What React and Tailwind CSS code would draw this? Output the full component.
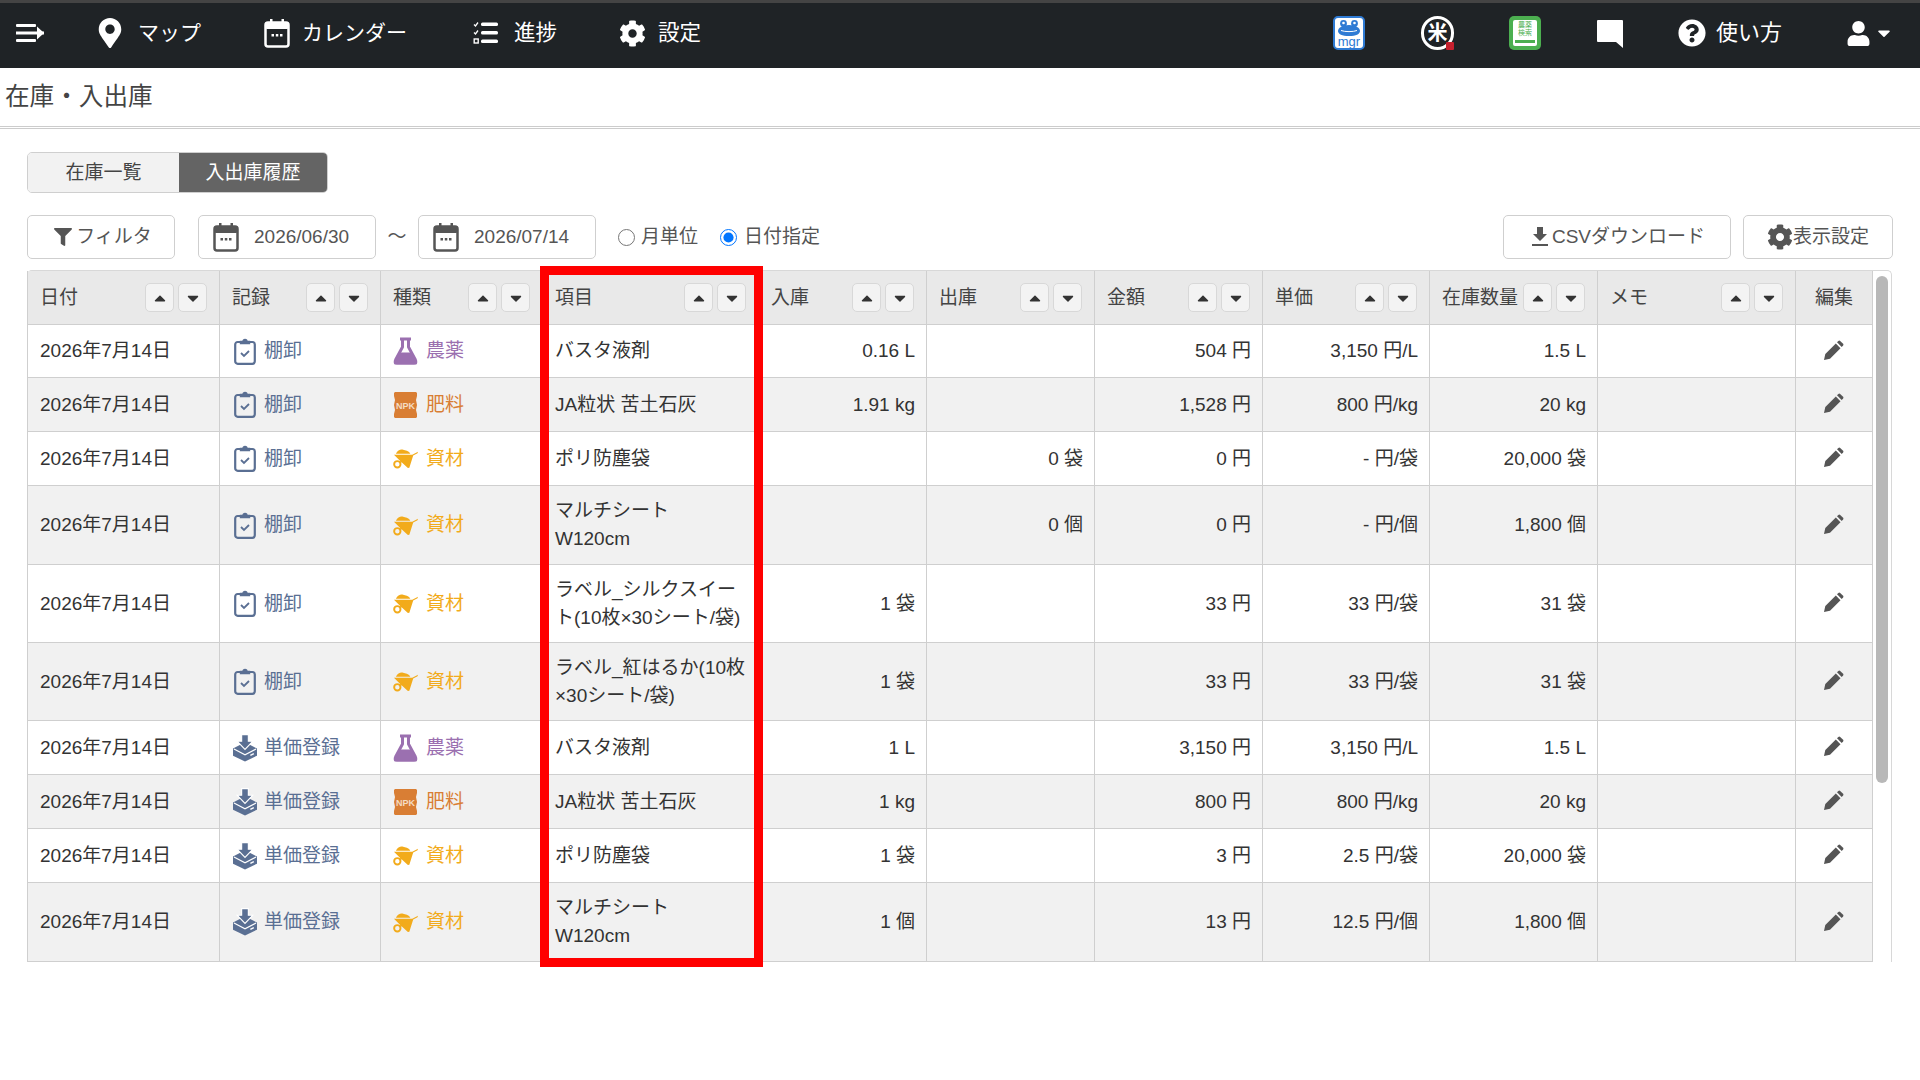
import React from "react";
import { FaMapMarkerAlt, FaCog, FaQuestionCircle, FaUser, FaCaretDown, FaCaretUp, FaFilter } from "react-icons/fa";

const font = { fontFamily: '"Liberation Sans","Noto Sans CJK JP",sans-serif' };

function Burger() {
  return (
    <svg width="28" height="22" viewBox="0 0 28 22" fill="white">
      <rect x="0" y="2" width="20" height="3" rx="1" />
      <rect x="0" y="9.5" width="28" height="3" />
      <rect x="0" y="17" width="20" height="3" rx="1" />
      <path d="M21 4.5 28 11 21 17.5Z" />
    </svg>
  );
}

function Calendar({ color, fill, w = 26, h = 30 }) {
  return (
    <svg width={w} height={h} viewBox="0 0 26 30">
      <rect x="1.5" y="4.5" width="23" height="24" rx="2.5" fill={fill} stroke={color} strokeWidth="2.5" />
      <rect x="1" y="4" width="24" height="7" rx="2" fill={color} />
      <rect x="6" y="1" width="2.5" height="5" fill={color} />
      <rect x="17.5" y="1" width="2.5" height="5" fill={color} />
      <rect x="7.5" y="16" width="2.5" height="2.5" fill={color} />
      <rect x="11.8" y="16" width="2.5" height="2.5" fill={color} />
      <rect x="16" y="16" width="2.5" height="2.5" fill={color} />
    </svg>
  );
}

function Tasks() {
  return (
    <svg width="25" height="24" viewBox="0 0 25 24" fill="none" stroke="white">
      <path d="M1 3.5 2.5 5 5 1.5M1 11.5 2.5 13 5 9.5" strokeWidth="1.3" />
      <rect x="1.2" y="18" width="4" height="4" strokeWidth="1.4" />
      <rect x="8" y="1.5" width="17" height="3.4" rx="1.5" fill="white" stroke="none" />
      <rect x="8" y="10" width="17" height="3.4" rx="1.5" fill="white" stroke="none" />
      <rect x="8" y="18.5" width="17" height="3.4" rx="1.5" fill="white" stroke="none" />
    </svg>
  );
}

function Mgr() {
  return (
    <div className="relative w-[32px] h-[34px] rounded-[5px] bg-white border-2 border-[#2f7bd4]">
      <svg width="28" height="20" viewBox="0 0 28 20" className="absolute left-0 top-0">
        <circle cx="8.5" cy="5.5" r="3.4" fill="#2f7bd4" />
        <circle cx="19.5" cy="5.5" r="3.4" fill="#2f7bd4" />
        <circle cx="8.5" cy="5" r="1.3" fill="white" />
        <circle cx="19.5" cy="5" r="1.3" fill="white" />
        <path d="M14 7c7 0 11 3 11 6s-4 5-11 5-11-2-11-5 4-6 11-6z" fill="#2f7bd4" />
        <path d="M6 12.5c4 1.5 12 1.5 16 0" stroke="white" strokeWidth="1" fill="none" />
      </svg>
      <span className="absolute left-0 right-0 top-[18px] text-center text-[13px] leading-[12px] text-[#2f7bd4]">mgr</span>
    </div>
  );
}

function Rice() {
  return (
    <div className="relative w-[33px] h-[34px] rounded-full border-[3px] border-white flex items-center justify-center">
      <span className="text-white text-[20px] leading-none font-bold">米</span>
      <span className="absolute right-[-3px] bottom-[-3px] w-[8px] h-[8px] bg-[#c5202e] rounded-[1px]"></span>
    </div>
  );
}

function BookIcon() {
  return (
    <div className="relative w-[32px] h-[34px] rounded-[5px] bg-[#4caf50] p-[4px]">
      <div className="w-full h-full bg-white rounded-[2px] flex flex-col items-center pt-[1px]">
        <span className="text-[#4caf50] text-[7px] leading-[8px] whitespace-nowrap">農薬</span>
        <span className="text-[#4caf50] text-[7px] leading-[8px] whitespace-nowrap">検索</span>
        <span className="mt-[3px] w-[20px] h-[3px] bg-[#4caf50]"></span>
      </div>
    </div>
  );
}

function Chat() {
  return (
    <svg width="28" height="32" viewBox="0 0 28 32" fill="white">
      <path d="M2 3h24a1 1 0 0 1 1 1v27l-7-6H2a1 1 0 0 1-1-1V4a1 1 0 0 1 1-1z" />
    </svg>
  );
}

function Clipboard() {
  return (
    <svg width="22" height="27" viewBox="0 0 22 27" fill="none" stroke="#5a6f93">
      <rect x="1.2" y="4" width="19.6" height="21.8" rx="2.5" strokeWidth="2.2" />
      <path d="M6.5 5.5V3.5h2.5a2 2 0 0 1 4 0h2.5v2z" fill="#5a6f93" strokeWidth="1.4" />
      <path d="M7 15l3 3 5-5" strokeWidth="1.8" />
    </svg>
  );
}

function BoxDown() {
  return (
    <svg width="25" height="28" viewBox="0 0 25 28">
      <path d="M12.5 8 25 14.5V22L12.5 28 0 22V14.5Z" fill="#5a6f93" />
      <path d="M1 15 12.5 21 24 15" fill="none" stroke="white" strokeWidth="1.3" />
      <path d="M9 0h7v7h4.5L12.5 15.5 4.5 7H9z" fill="#5a6f93" stroke="white" strokeWidth="1.2" />
      <rect x="18" y="20" width="4" height="1.5" fill="white" transform="rotate(-26 20 21)" />
    </svg>
  );
}

function Flask() {
  return (
    <svg width="25" height="28" viewBox="0 0 25 28">
      <path d="M7 2h11M9.5 2v8L2.5 23a2 2 0 0 0 2 3h16a2 2 0 0 0 2-3L15.5 10V2" fill="none" stroke="#9b70b0" strokeWidth="3" strokeLinejoin="round" />
      <path d="M6 15.5h13l5 9a2 2 0 0 1-2 3H3a2 2 0 0 1-2-3z" fill="#9b70b0" />
    </svg>
  );
}

function Bag() {
  return (
    <svg width="25" height="28" viewBox="0 0 25 28">
      <path d="M2 1h21l1 1v3l-1 4 1 5-1 5 1 4v3l-1 1H2l-1-1v-3l1-4-1-5 1-5-1-4V2z" fill="#d97e34" />
      <text x="12.5" y="17.5" textAnchor="middle" fontSize="9" fontWeight="700" fill="#f4dcc4" fontFamily="Liberation Sans">NPK</text>
    </svg>
  );
}

function Barrow() {
  return (
    <svg width="26" height="21" viewBox="0 0 26 21" fill="#f2ab1b">
      <path d="M1 6.5H20L26 3.5 25.5 5 21 7.5 17 20 15.5 20.5 7.5 13z" />
      <path d="M3 5.500C5 2 8 .5 10.500 1.500S16 2 18 5.500z" />
      <circle cx="4.500" cy="16.500" r="3.300" fill="none" stroke="#f2ab1b" strokeWidth="2" />
      <path d="M6.500 14.500l3-3 1.200 1.200-3 3z" />
    </svg>
  );
}

function Pencil() {
  return (
    <svg width="21" height="21" viewBox="0 0 21 21" fill="#555">
      <path d="M1 20l1.300-6L12.800 3.500l4.700 4.700L7 18.700z" />
      <path d="M14 2.300l1.400-1.400a1.300 1.300 0 0 1 1.800 0l2.900 2.900a1.300 1.300 0 0 1 0 1.800L18.700 7z" />
    </svg>
  );
}

function SortButtons() {
  const b = "w-[29px] h-[29px] rounded-[5px] bg-[#f3f3f3] border border-[#d8d8d8] flex items-center justify-center text-[#333]";
  return (
    <div className="flex gap-[4px] shrink-0">
      <div className={b}><FaCaretUp size={18} /></div>
      <div className={b}><FaCaretDown size={18} /></div>
    </div>
  );
}

const widths = [193, 161, 162, 216, 168, 168, 168, 167, 168, 198, 77];
const heads = ["日付", "記録", "種類", "項目", "入庫", "出庫", "金額", "単価", "在庫数量", "メモ"];

const T = { 農薬: ["#9b70b0", Flask], 肥料: ["#d97e34", Bag], 資材: ["#f2ab1b", Barrow] };
const R = { 棚卸: Clipboard, 単価登録: BoxDown };

const rowH = ["h-[53px]", "h-[54px]", "h-[54px]", "h-[79px]", "h-[78px]", "h-[78px]", "h-[54px]", "h-[54px]", "h-[54px]", "h-[79px]"];

const rows = [
  ["棚卸", "農薬", ["バスタ液剤"], "0.16 L", "", "504 円", "3,150 円/L", "1.5 L"],
  ["棚卸", "肥料", ["JA粒状 苦土石灰"], "1.91 kg", "", "1,528 円", "800 円/kg", "20 kg"],
  ["棚卸", "資材", ["ポリ防塵袋"], "", "0 袋", "0 円", "- 円/袋", "20,000 袋"],
  ["棚卸", "資材", ["マルチシート", "W120cm"], "", "0 個", "0 円", "- 円/個", "1,800 個"],
  ["棚卸", "資材", ["ラベル_シルクスイー", "ト(10枚×30シート/袋)"], "1 袋", "", "33 円", "33 円/袋", "31 袋"],
  ["棚卸", "資材", ["ラベル_紅はるか(10枚", "×30シート/袋)"], "1 袋", "", "33 円", "33 円/袋", "31 袋"],
  ["単価登録", "農薬", ["バスタ液剤"], "1 L", "", "3,150 円", "3,150 円/L", "1.5 L"],
  ["単価登録", "肥料", ["JA粒状 苦土石灰"], "1 kg", "", "800 円", "800 円/kg", "20 kg"],
  ["単価登録", "資材", ["ポリ防塵袋"], "1 袋", "", "3 円", "2.5 円/袋", "20,000 袋"],
  ["単価登録", "資材", ["マルチシート", "W120cm"], "1 個", "", "13 円", "12.5 円/個", "1,800 個"],
];

const cellB = "border-b border-r border-[#cfcfcf]";

export default function App() {
  return (
    <div style={font} className="relative w-[1920px] h-[1080px] bg-white text-[19px] leading-[28px] text-[#333] overflow-hidden">
      <header className="h-[68px] bg-[#1f2326] border-t-[3px] border-[#444] pb-[5px] flex items-center text-white text-[21px]">
        <div className="ml-[16px] w-[28px] flex"><Burger /></div>
        <div className="ml-[54px] flex items-center gap-[16px]"><FaMapMarkerAlt size={30} className="w-[24px]" /><span className="w-[64px]">マップ</span></div>
        <div className="ml-[62px] flex items-center gap-[12px]"><Calendar color="white" fill="#1f2326" /><span className="w-[105px] whitespace-nowrap">カレンダー</span></div>
        <div className="ml-[66px] flex items-center gap-[16px]"><Tasks /><span className="text-[21.5px]">進捗</span></div>
        <div className="ml-[62px] flex items-center gap-[12px]"><FaCog size={27} /><span className="text-[21.5px]">設定</span></div>
        <div className="ml-auto flex items-center">
          <Mgr />
          <div className="ml-[56px]"><Rice /></div>
          <div className="ml-[55px]"><BookIcon /></div>
          <div className="ml-[55px]"><Chat /></div>
          <div className="ml-[54px] flex items-center gap-[10px]"><FaQuestionCircle size={28} /><span className="text-[22px]">使い方</span></div>
          <div className="ml-[64px] mr-[26px] flex items-center gap-[3px]"><FaUser size={25} /><FaCaretDown size={20} /></div>
        </div>
      </header>

      <div className="h-[61px] flex items-center pl-[5px] text-[24.6px] text-[#444] border-b-[3px] border-double border-[#ccc]">在庫・入出庫</div>

      <div className="px-[27px] pt-[23px]">
        <div className="flex w-[301px] h-[41px] rounded-[5px] border border-[#cfcfcf] overflow-hidden">
          <div className="w-[151px] bg-[#f2f2f2] flex items-center justify-center text-[#444]">在庫一覧</div>
          <div className="flex-1 bg-[#646464] text-white flex items-center justify-center">入出庫履歴</div>
        </div>

        <div className="mt-[22px] h-[44px] flex items-center text-[#555]">
          <div className="w-[148px] h-full rounded-[5px] border border-[#cfcfcf] flex items-center justify-center gap-[4px] pl-[4px]"><FaFilter size={18} />フィルタ</div>
          <div className="ml-[23px] w-[178px] h-full rounded-[5px] border border-[#cfcfcf] flex items-center pl-[14px] gap-[15px]"><Calendar color="#555" fill="white" />2026/06/30</div>
          <span className="w-[42px] text-center text-[#555]">～</span>
          <div className="w-[178px] h-full rounded-[5px] border border-[#cfcfcf] flex items-center pl-[14px] gap-[15px]"><Calendar color="#555" fill="white" />2026/07/14</div>
          <label className="ml-[22px] flex items-center gap-[6px]"><input type="radio" name="m" className="w-[17px] h-[17px] m-0" readOnly />月単位</label>
          <label className="ml-[22px] flex items-center gap-[7px]"><input type="radio" name="m" className="w-[17px] h-[17px] m-0" defaultChecked />日付指定</label>
          <div className="ml-auto w-[228px] h-full rounded-[5px] border border-[#cfcfcf] flex items-center justify-center gap-[4px] pl-[3px]">
            <svg width="16" height="20" viewBox="0 0 16 20" fill="#555"><path d="M5 0h6v7h4l-7 7-7-7h4z" /><rect x="0" y="17" width="16" height="2" /></svg>
            CSVダウンロード
          </div>
          <div className="ml-[12px] w-[150px] h-full rounded-[5px] border border-[#cfcfcf] flex items-center justify-center"><FaCog size={26} />表示設定</div>
        </div>

        <div className="relative mt-[11px] w-[1865px] h-[692px] rounded-t-[5px] border-t border-r border-[#d8d8d8]">
          <table className="table-fixed w-[1846px] border-separate border-spacing-0">
            <colgroup>
              {widths.map((w, i) => <col key={i} style={{ width: w }} />)}
            </colgroup>
            <thead>
              <tr className="h-[54px] bg-[#e9e9e9] text-[#444]">
                {heads.map((h, i) => (
                  <th key={h} className={`${cellB} ${i === 0 ? "border-l" : ""} font-normal px-[12px] p-0`}>
                    <div className="flex items-center justify-between">
                      <span className="whitespace-nowrap">{h}</span>
                      <SortButtons />
                    </div>
                  </th>
                ))}
                <th className={`${cellB} font-normal text-center`}>編集</th>
              </tr>
            </thead>
            <tbody>
              {rows.map((r, i) => {
                const Rec = R[r[0]];
                const [c, Ty] = T[r[1]];
                return (
                  <tr key={i} className={`${rowH[i]} ${i % 2 ? "bg-[#f1f1f1]" : "bg-white"}`}>
                    <td className={`${cellB} border-l px-[12px]`}>2026年7月14日</td>
                    <td className={`${cellB} pl-[13px] pr-[6px]`}>
                      <div className="flex items-center gap-[7px] text-[#5a6f93]"><span className="w-[24px] flex justify-center"><Rec /></span>{r[0]}</div>
                    </td>
                    <td className={`${cellB} pl-[12px]`}>
                      <div className="flex items-center gap-[8px]" style={{ color: c }}><span className="w-[25px] flex justify-center"><Ty /></span>{r[1]}</div>
                    </td>
                    <td className={`${cellB} px-[12px] whitespace-nowrap`}>{r[2].map((l, k) => <div key={k}>{l}</div>)}</td>
                    {r.slice(3).map((v, k) => <td key={k} className={`${cellB} pl-[12px] pr-[11px] text-right whitespace-nowrap`}>{v}</td>)}
                    <td className={cellB}></td>
                    <td className={cellB}><div className="flex justify-center pb-[2px] pr-[1px]"><Pencil /></div></td>
                  </tr>
                );
              })}
            </tbody>
          </table>
          <div className="absolute left-[1849px] top-[5px] w-[12px] h-[507px] rounded-full bg-[#b8b8b8]"></div>
        </div>
      </div>

      <div className="absolute left-[540px] top-[266px] w-[223px] h-[701px] border-[9px] border-[#ff0000]"></div>
    </div>
  );
}
